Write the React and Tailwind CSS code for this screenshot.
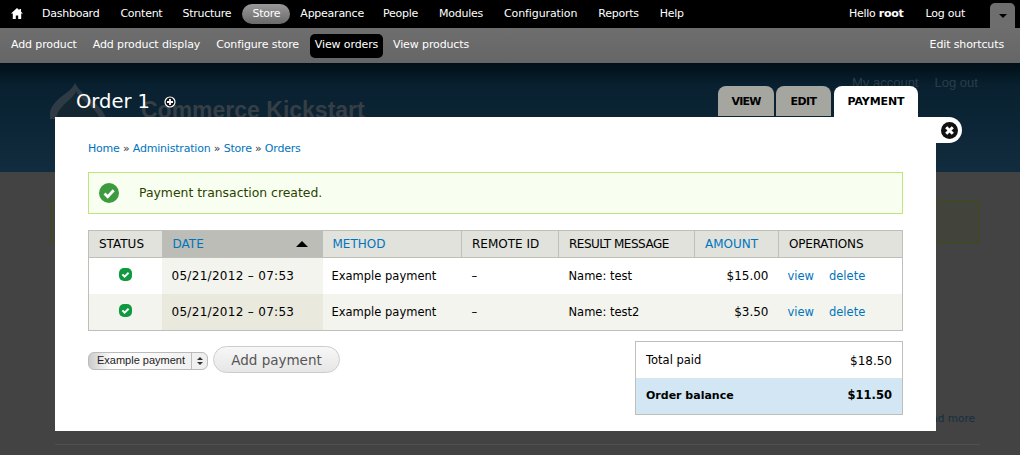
const shortcuts = ['Add product', 'Add product display', 'Configure store'];

const rows = [
  { date: '05/21/2012 – 07:53', method: 'Example payment', remote: '–', result: 'Name: test', amount: '$15.00', even: false },
  { date: '05/21/2012 – 07:53', method: 'Example payment', remote: '–', result: 'Name: test2', amount: '$3.50', even: true },
];

function StatusIcon() {
  return (
    <svg width="13" height="13" viewBox="0 0 13 13" className="block mx-auto">
      <rect x="0" y="0" width="13" height="13" rx="5" fill="#0f9a3f" />
      <path d="M3.4 6.4l2.2 2.2 4-3.8" fill="none" stroke="#fff" strokeWidth="2" />
    </svg>
  );
}

function Toolbar() {
  return (
    <div className="text-white text-[11px]">
      <div className="h-[28px] bg-black flex items-center pl-[11px] pr-[5px] tracking-[-0.25px]">
        <svg width="12" height="11" viewBox="0 0 12 11" className="mr-[19px] mb-[1px]">
          <path d="M6 0L0 5.6h1.8V11h3V7.4h2.4V11h3V5.6H12L10 3.7V1H8.4v1.2z" fill="#fff" />
        </svg>
        <span className="mr-[21px]">Dashboard</span>
        <span className="mr-[20px]">Content</span>
        <span className="mr-[11px]">Structure</span>
        <span className="h-[20px] w-[48px] mr-[10px] rounded-[10px] bg-gradient-to-b from-[#999] to-[#6a6a6a] flex items-center justify-center">Store</span>
        <span className="mr-[19px]">Appearance</span>
        <span className="mr-[21px]">People</span>
        <span className="mr-[21px]">Modules</span>
        <span className="mr-[21px] tracking-[-0.1px]">Configuration</span>
        <span className="mr-[21px]">Reports</span>
        <span>Help</span>
        <span className="ml-auto mr-[22px]">Hello <b>root</b></span>
        <span className="mr-[25px]">Log out</span>
        <div className="w-[25px] h-[25px] mt-[3px] self-start rounded-t-[5px] bg-[#6e6e6e] flex items-center justify-center">
          <div className="w-0 h-0 border-x-[4px] border-x-transparent border-t-[4px] border-t-black" />
        </div>
      </div>
      <div className="h-[35px] bg-gradient-to-b from-[#6e6e6e] to-[#666] flex items-center pl-[11px] pr-[16px] tracking-[-0.12px]">
        {shortcuts.map(l => (
          <span key={l} className="mr-[16px]">{l}</span>
        ))}
        <span className="h-[24px] w-[73px] -ml-[5px] mr-[10px] bg-black rounded-[5px] flex items-center justify-center">View orders</span>
        <span>View products</span>
        <span className="ml-auto">Edit shortcuts</span>
      </div>
    </div>
  );
}

function Backdrop() {
  return (
    <div>
      <div className="h-[109px] bg-gradient-to-b from-[#020f18] via-[#08202f] via-20% to-[#122c3f] relative">
        <svg width="58" height="36" viewBox="0 0 58 36" className="absolute left-[50px] top-[20px]">
          <path d="M25 0C22 10 0 16 0 32v4h56C52 20 32 14 25 0z" fill="#2f3b44" />
          <path d="M26 8C24 16 8 22 6 36h44C46 24 30 18 26 8z" fill="#14262f" />
        </svg>
        <div className="absolute left-[141px] top-[30px] text-[23px] text-[#363f45] font-['Liberation_Sans',sans-serif] font-bold">Commerce Kickstart</div>
        <div className="absolute left-[852px] top-[10px] flex gap-[16px] text-[13px] text-[#2c3d49] font-['Liberation_Sans',sans-serif]">
          <span>My account</span>
          <span>Log out</span>
        </div>
        <div className="absolute left-[76px] top-[24px] flex items-center gap-[14px] text-white">
          <span className="text-[19.5px]">Order 1</span>
          <svg width="12" height="12" viewBox="0 0 12 12">
            <circle cx="6" cy="6" r="5" fill="#111" stroke="#fff" strokeWidth="1.2" />
            <path d="M3 6h6M6 3v6" stroke="#fff" strokeWidth="1.8" />
          </svg>
        </div>
        <div className="absolute left-[718px] top-[23px] flex text-[11px] font-bold">
          <span className="w-[56px] h-[30px] pt-[2px] mr-[2px] rounded-t-[8px] bg-[#a6a6a0] text-black flex items-center justify-center tracking-[-0.8px]">VIEW</span>
          <span className="w-[55px] h-[30px] pt-[2px] mr-[3px] rounded-t-[8px] bg-[#a6a6a0] text-black flex items-center justify-center tracking-[-0.5px]">EDIT</span>
          <span className="w-[84px] h-[31px] pt-[1px] rounded-t-[8px] bg-white text-black flex items-center justify-center tracking-[-0.1px]">PAYMENT</span>
        </div>
      </div>
      <div className="h-[283px] bg-[#434343] pl-[50px] pr-[40px] pt-[28px]">
        <div className="h-[44px] border border-[#3a4d1a] bg-[#42443c]" />
        <div className="mt-[167px] mr-[5px] flex justify-end text-[10.5px] text-[#15303f]">ad more</div>
        <div className="mt-[17px] h-px bg-[#505050] ml-[5px]" />
      </div>
    </div>
  );
}

function PaymentTable() {
  return (
    <table className="w-[815px] table-fixed border-collapse border border-[#bebfb9] text-[11.5px]">
      <colgroup>
        <col className="w-[73px]" />
        <col className="w-[161px]" />
        <col className="w-[139px]" />
        <col className="w-[97px]" />
        <col className="w-[136px]" />
        <col className="w-[84px]" />
        <col />
      </colgroup>
      <thead>
        <tr className="h-[27px] bg-[#e1e2dc] text-left text-[12px]">
          <th className="font-normal pl-[10px] text-black border-b border-[#bebfb9]">STATUS</th>
          <th className="font-normal pl-[11px] pr-[15px] bg-[#bdbdb8] text-[#0074bd] border-b border-[#bebfb9]">
            <div className="flex items-center justify-between">
              DATE
              <div className="w-0 h-0 border-x-[6px] border-x-transparent border-b-[6px] border-b-black" />
            </div>
          </th>
          <th className="font-normal pl-[10px] text-[#0074bd] border-b border-r border-[#bebfb9]">METHOD</th>
          <th className="font-normal pl-[10px] text-black border-b border-r border-[#bebfb9]">REMOTE ID</th>
          <th className="font-normal pl-[10px] text-black border-b border-r border-[#bebfb9] tracking-[-0.5px]">RESULT MESSAGE</th>
          <th className="font-normal pl-[10px] text-[#0074bd] border-b border-r border-[#bebfb9]">AMOUNT</th>
          <th className="font-normal pl-[10px] text-black border-b border-[#bebfb9] tracking-[-0.2px]">OPERATIONS</th>
        </tr>
      </thead>
      <tbody>
        {rows.map((r, i) => (
          <tr key={i} className={r.even ? 'h-[37px] bg-[#f3f4ee]' : 'h-[36px] bg-white'}>
            <td className="pb-[3px]"><StatusIcon /></td>
            <td className={r.even ? 'pl-[10px] pt-[1px] text-[12px] tracking-[0.3px] bg-[#e9e9dd]' : 'pl-[10px] pt-[1px] text-[12px] tracking-[0.3px] bg-[#f3f4ee]'}>{r.date}</td>
            <td className="pl-[9px] pt-[1px]">{r.method}</td>
            <td className="pl-[10px] pt-[1px]">{r.remote}</td>
            <td className="pl-[10px] pt-[1px]">{r.result}</td>
            <td className="pr-[10px] pt-[1px] text-right text-[12px]">{r.amount}</td>
            <td className="pl-[9px] pt-[1px] text-[#0074bd]">
              <span className="mr-[15px]">view</span>
              <span>delete</span>
            </td>
          </tr>
        ))}
      </tbody>
    </table>
  );
}

function Totals() {
  return (
    <div className="w-[268px] border border-[#bebfb9] text-[11.5px]">
      <div className="h-[36px] pt-[1px] flex items-center justify-between px-[10px]">
        <span>Total paid</span>
        <span className="text-[12px]">$18.50</span>
      </div>
      <div className="h-[36px] flex items-center justify-between px-[10px] bg-[#d2e7f3] font-bold text-[11px]">
        <span>Order balance</span>
        <span className="text-[11.5px]">$11.50</span>
      </div>
    </div>
  );
}

function Modal() {
  return (
    <div className="absolute left-[55px] top-[117px] w-[881px] h-[314px] bg-white pl-[33px] pt-[25px] pr-[33px] text-black">
      <div className="text-[11px] tracking-[-0.2px] h-[13px] leading-[13px] text-[#0074bd]">
        Home <span className="text-[#333]">»</span> Administration <span className="text-[#333]">»</span> Store <span className="text-[#333]">»</span> Orders
      </div>
      <div className="mt-[17px] h-[42px] border border-[#bce678] bg-[#f8fff0] flex items-center pl-[10px] text-[12.4px] text-[#2b3f00]">
        <svg width="20" height="20" viewBox="0 0 20 20" className="mr-[20px]">
          <circle cx="10" cy="10" r="10" fill="#3d9a3f" />
          <path d="M5.5 10.5l3.2 3.2 6-6.4" fill="none" stroke="#fff" strokeWidth="2.8" />
        </svg>
        Payment transaction created.
      </div>
      <div className="mt-[16px]">
        <PaymentTable />
      </div>
      <div className="mt-[10px] flex items-start justify-between">
        <div className="flex items-center mt-[5px] gap-[5px]">
          <div className="h-[18px] w-[120px] mt-[2px] rounded-[6px] border border-[#bbb] bg-gradient-to-r from-[#ccc] via-white via-20% to-[#eee] flex items-center text-[11px] text-[#222] font-['Liberation_Sans',sans-serif] whitespace-nowrap">
            <span className="pl-[8px] w-[102px]">Example payment</span>
            <span className="border-l border-[#bbb] h-full flex-1 flex flex-col items-center justify-center gap-[2px]">
              <span className="w-0 h-0 border-x-[3px] border-x-transparent border-b-[3px] border-b-[#333]" />
              <span className="w-0 h-0 border-x-[3px] border-x-transparent border-t-[3px] border-t-[#333]" />
            </span>
          </div>
          <div className="h-[27px] w-[127px] pt-[1px] rounded-[14px] border border-[#ccc] bg-gradient-to-b from-[#f7f7f7] to-[#e6e6e6] flex items-center justify-center text-[13.5px] text-[#555]">
            Add payment
          </div>
        </div>
        <Totals />
      </div>
      <div className="absolute left-[881px] top-0 w-[26px] h-[26px] rounded-r-[13px] bg-white">
        <svg width="17" height="17" viewBox="0 0 17 17" className="absolute left-[5px] top-[5px]">
          <circle cx="8.5" cy="8.5" r="8.5" fill="#111" />
          <path d="M5.2 5.2l6.6 6.6M11.8 5.2l-6.6 6.6" stroke="#fff" strokeWidth="3" />
        </svg>
      </div>
    </div>
  );
}

export default function App() {
  return (
    <div className="relative w-[1020px] h-[455px] overflow-hidden font-['DejaVu_Sans',sans-serif]">
      <Toolbar />
      <Backdrop />
      <Modal />
    </div>
  );
}
